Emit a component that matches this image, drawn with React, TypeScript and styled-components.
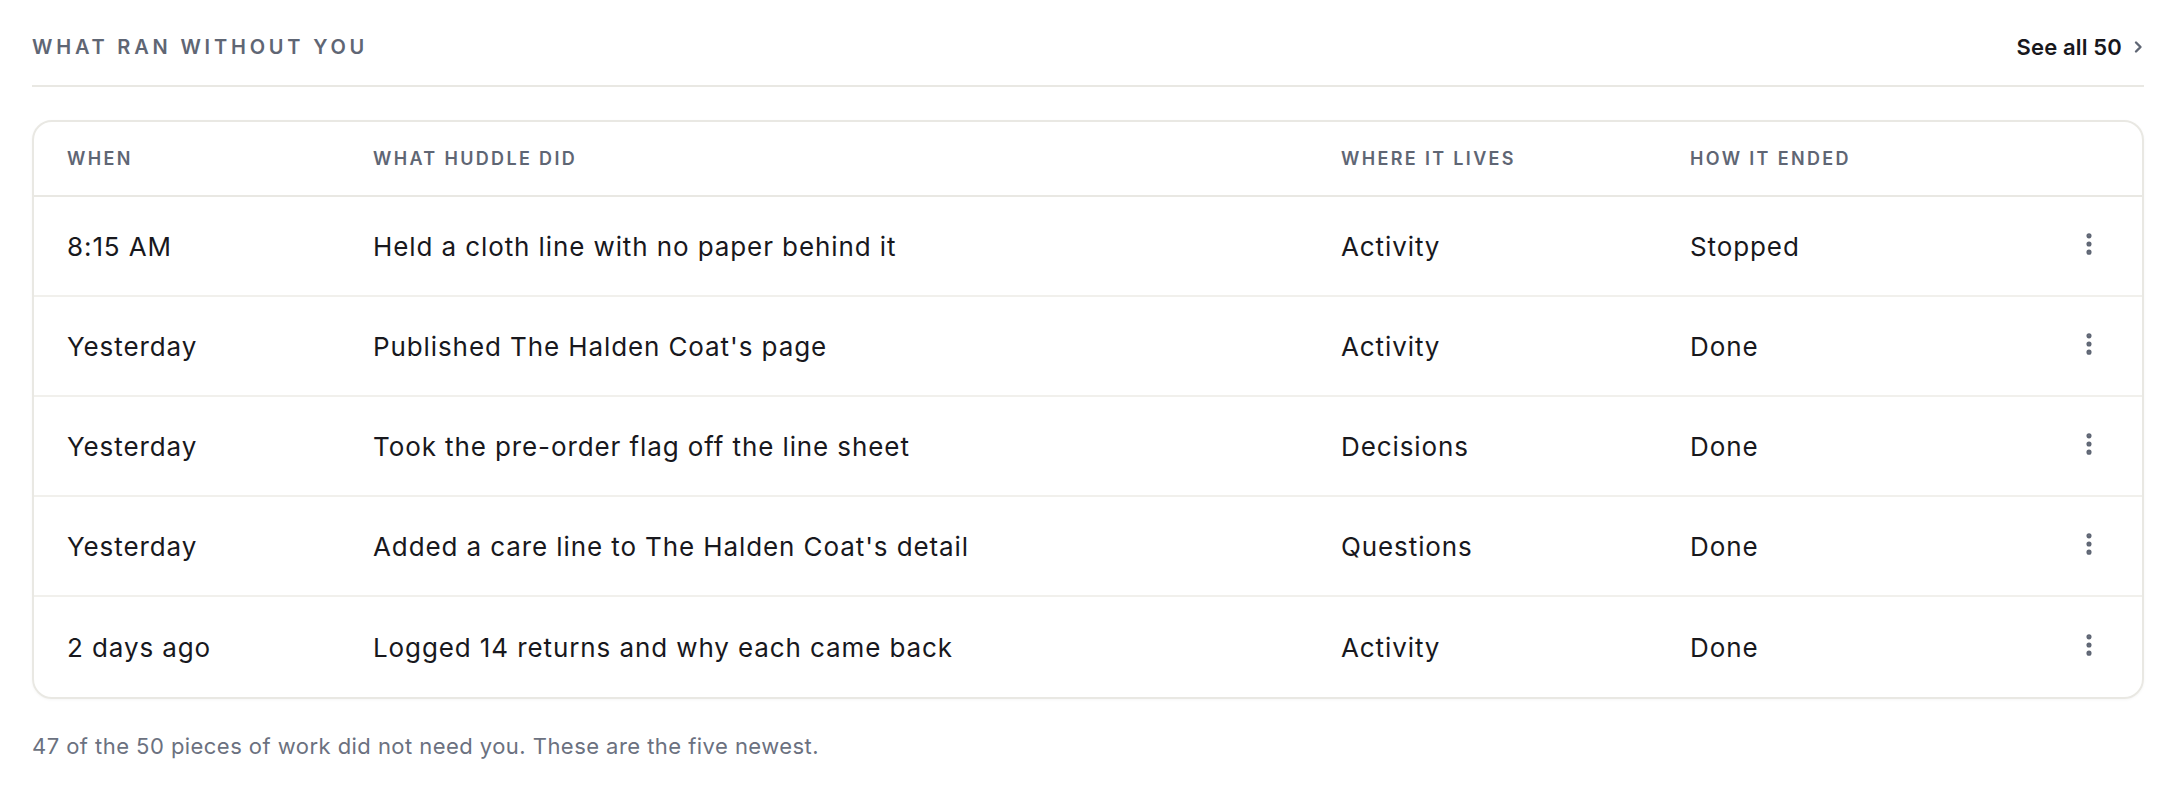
import styled, { createGlobalStyle } from 'styled-components';
import { EllipsisVertical } from 'lucide-react';

const GlobalStyle = createGlobalStyle`
  html, body {
    margin: 0;
    padding: 0;
    background: #ffffff;
  }
  body {
    font-family: Inter, "Noto Sans", "Liberation Sans", sans-serif;
    color: #1b1b21;
    -webkit-font-smoothing: antialiased;
  }
`;

const COLOR = {
  TEXT_PRIMARY: '#18181d',
  TEXT_MUTED: '#5f6674',
  TEXT_FOOT: '#6b7180',
  BORDER: '#e9e8e3',
  ROW_BORDER: '#f1f0ec',
};

const COLUMNS = '306px 968px 349px 1fr 96px';

const Page = styled.main`
  padding: 24px 32px;
`;

const SectionHeader = styled.header`
  display: flex;
  justify-content: space-between;
  align-items: center;
  height: 46px;
  padding-bottom: 15px;
  border-bottom: 2px solid ${COLOR.BORDER};
`;

const SectionTitle = styled.h2`
  margin: 0;
  font-size: 20px;
  font-weight: 600;
  letter-spacing: 0.19em;
  color: ${COLOR.TEXT_MUTED};
  text-transform: uppercase;
`;

const SeeAllLink = styled.a`
  display: flex;
  align-items: center;
  gap: 10px;
  font-size: 22px;
  font-weight: 600;
  letter-spacing: 0.15px;
  color: ${COLOR.TEXT_PRIMARY};
  text-decoration: none;
  cursor: pointer;

  svg {
    color: ${COLOR.TEXT_MUTED};
  }
`;

const Card = styled.section`
  margin-top: 33px;
  border: 2px solid ${COLOR.BORDER};
  border-radius: 20px;
  box-shadow: 0 1px 3px rgba(20, 20, 10, 0.04);
  overflow: hidden;
`;

const HeadRow = styled.div`
  display: grid;
  grid-template-columns: ${COLUMNS};
  align-items: center;
  height: 73px;
  border-bottom: 2px solid ${COLOR.BORDER};
`;

const HeadCell = styled.div`
  padding-left: 33px;
  font-size: 18px;
  font-weight: 600;
  letter-spacing: 0.13em;
  color: ${COLOR.TEXT_MUTED};
  text-transform: uppercase;
`;

const Row = styled.div<{ $last: boolean }>`
  display: grid;
  grid-template-columns: ${COLUMNS};
  align-items: center;
  height: ${({ $last }) => ($last ? '100px' : '98px')};
  border-bottom: ${({ $last }) =>
    $last ? 'none' : `2px solid ${COLOR.ROW_BORDER}`};
`;

const Cell = styled.div`
  padding-left: 33px;
  font-size: 26px;
  font-weight: 400;
  letter-spacing: 0.9px;
  color: ${COLOR.TEXT_PRIMARY};
  white-space: nowrap;
`;

const ActionCell = styled.div`
  display: flex;
  justify-content: flex-end;
  padding-right: 33px;
`;

const MenuButton = styled.button`
  display: flex;
  align-items: center;
  justify-content: center;
  width: 40px;
  height: 40px;
  padding: 0;
  border: none;
  background: transparent;
  color: ${COLOR.TEXT_MUTED};
  cursor: pointer;
  margin-top: -4px;
`;

const FootNote = styled.p`
  margin: 31px 0 0;
  font-size: 22px;
  line-height: 33px;
  letter-spacing: 0.45px;
  color: ${COLOR.TEXT_FOOT};
`;

const Chevron = () => (
  <svg width="12" height="16" viewBox="0 0 12 16" fill="none">
    <path
      d="M4 3.5 L8.5 8 L4 12.5"
      stroke="currentColor"
      strokeWidth="2.4"
      strokeLinecap="round"
      strokeLinejoin="round"
    />
  </svg>
);

type Run = {
  when: string;
  what: string;
  where: string;
  ended: string;
};

const RUNS: Run[] = [
  { when: '8:15 AM', what: 'Held a cloth line with no paper behind it', where: 'Activity', ended: 'Stopped' },
  { when: 'Yesterday', what: "Published The Halden Coat's page", where: 'Activity', ended: 'Done' },
  { when: 'Yesterday', what: 'Took the pre-order flag off the line sheet', where: 'Decisions', ended: 'Done' },
  { when: 'Yesterday', what: "Added a care line to The Halden Coat's detail", where: 'Questions', ended: 'Done' },
  { when: '2 days ago', what: 'Logged 14 returns and why each came back', where: 'Activity', ended: 'Done' },
];

export default function App() {
  return (
    <>
      <GlobalStyle />
      <Page>
        <SectionHeader>
          <SectionTitle>What ran without you</SectionTitle>
          <SeeAllLink>
            See all 50
            <Chevron />
          </SeeAllLink>
        </SectionHeader>

        <Card>
          <HeadRow>
            <HeadCell>When</HeadCell>
            <HeadCell>What Huddle did</HeadCell>
            <HeadCell>Where it lives</HeadCell>
            <HeadCell>How it ended</HeadCell>
            <HeadCell />
          </HeadRow>
          {RUNS.map((run, i) => (
            <Row key={i} $last={i === RUNS.length - 1}>
              <Cell>{run.when}</Cell>
              <Cell>{run.what}</Cell>
              <Cell>{run.where}</Cell>
              <Cell>{run.ended}</Cell>
              <ActionCell>
                <MenuButton aria-label="More actions">
                  <EllipsisVertical size={28} strokeWidth={2.4} />
                </MenuButton>
              </ActionCell>
            </Row>
          ))}
        </Card>

        <FootNote>
          47 of the 50 pieces of work did not need you. These are the five newest.
        </FootNote>
      </Page>
    </>
  );
}
